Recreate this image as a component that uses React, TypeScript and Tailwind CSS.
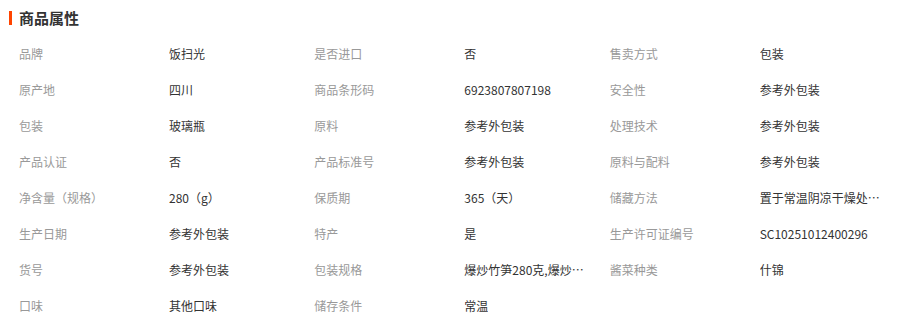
const attrs: [string, string][] = [
    ["品牌", "饭扫光"],
    ["是否进口", "否"],
    ["售卖方式", "包装"],
    ["原产地", "四川"],
    ["商品条形码", "6923807807198"],
    ["安全性", "参考外包装"],
    ["包装", "玻璃瓶"],
    ["原料", "参考外包装"],
    ["处理技术", "参考外包装"],
    ["产品认证", "否"],
    ["产品标准号", "参考外包装"],
    ["原料与配料", "参考外包装"],
    ["净含量（规格）", "280（g）"],
    ["保质期", "365（天）"],
    ["储藏方法", "置于常温阴凉干燥处保存"],
    ["生产日期", "参考外包装"],
    ["特产", "是"],
    ["生产许可证编号", "SC10251012400296"],
    ["货号", "参考外包装"],
    ["包装规格", "爆炒竹笋280克,爆炒榨菜280克"],
    ["酱菜种类", "什锦"],
    ["口味", "其他口味"],
    ["储存条件", "常温"],
]

function App() {
    return (
        <div className="w-[919px] h-[329px] bg-white overflow-hidden" style={{ fontFamily: '"Microsoft YaHei", "Noto Sans CJK SC", sans-serif' }}>
            <div className="h-9 flex items-center pl-[9px]">
                <span className="w-[3px] h-[14px] bg-[#ff4400] mr-[7px]"></span>
                <h2 className="text-[15px] font-bold text-[#333]">商品属性</h2>
            </div>
            <div className="ml-[19px] w-[886px] grid grid-cols-3">
                {attrs.map(([label, value], i) => {
                    return (
                        <div key={i} className="h-9 flex items-center text-xs">
                            <span className="w-[150px] shrink-0 text-[#999]">{label}</span>
                            <span className="max-w-[124px] truncate text-[#333]">{value}</span>
                        </div>
                    )
                })}
            </div>
        </div>
    )
}

export default App
